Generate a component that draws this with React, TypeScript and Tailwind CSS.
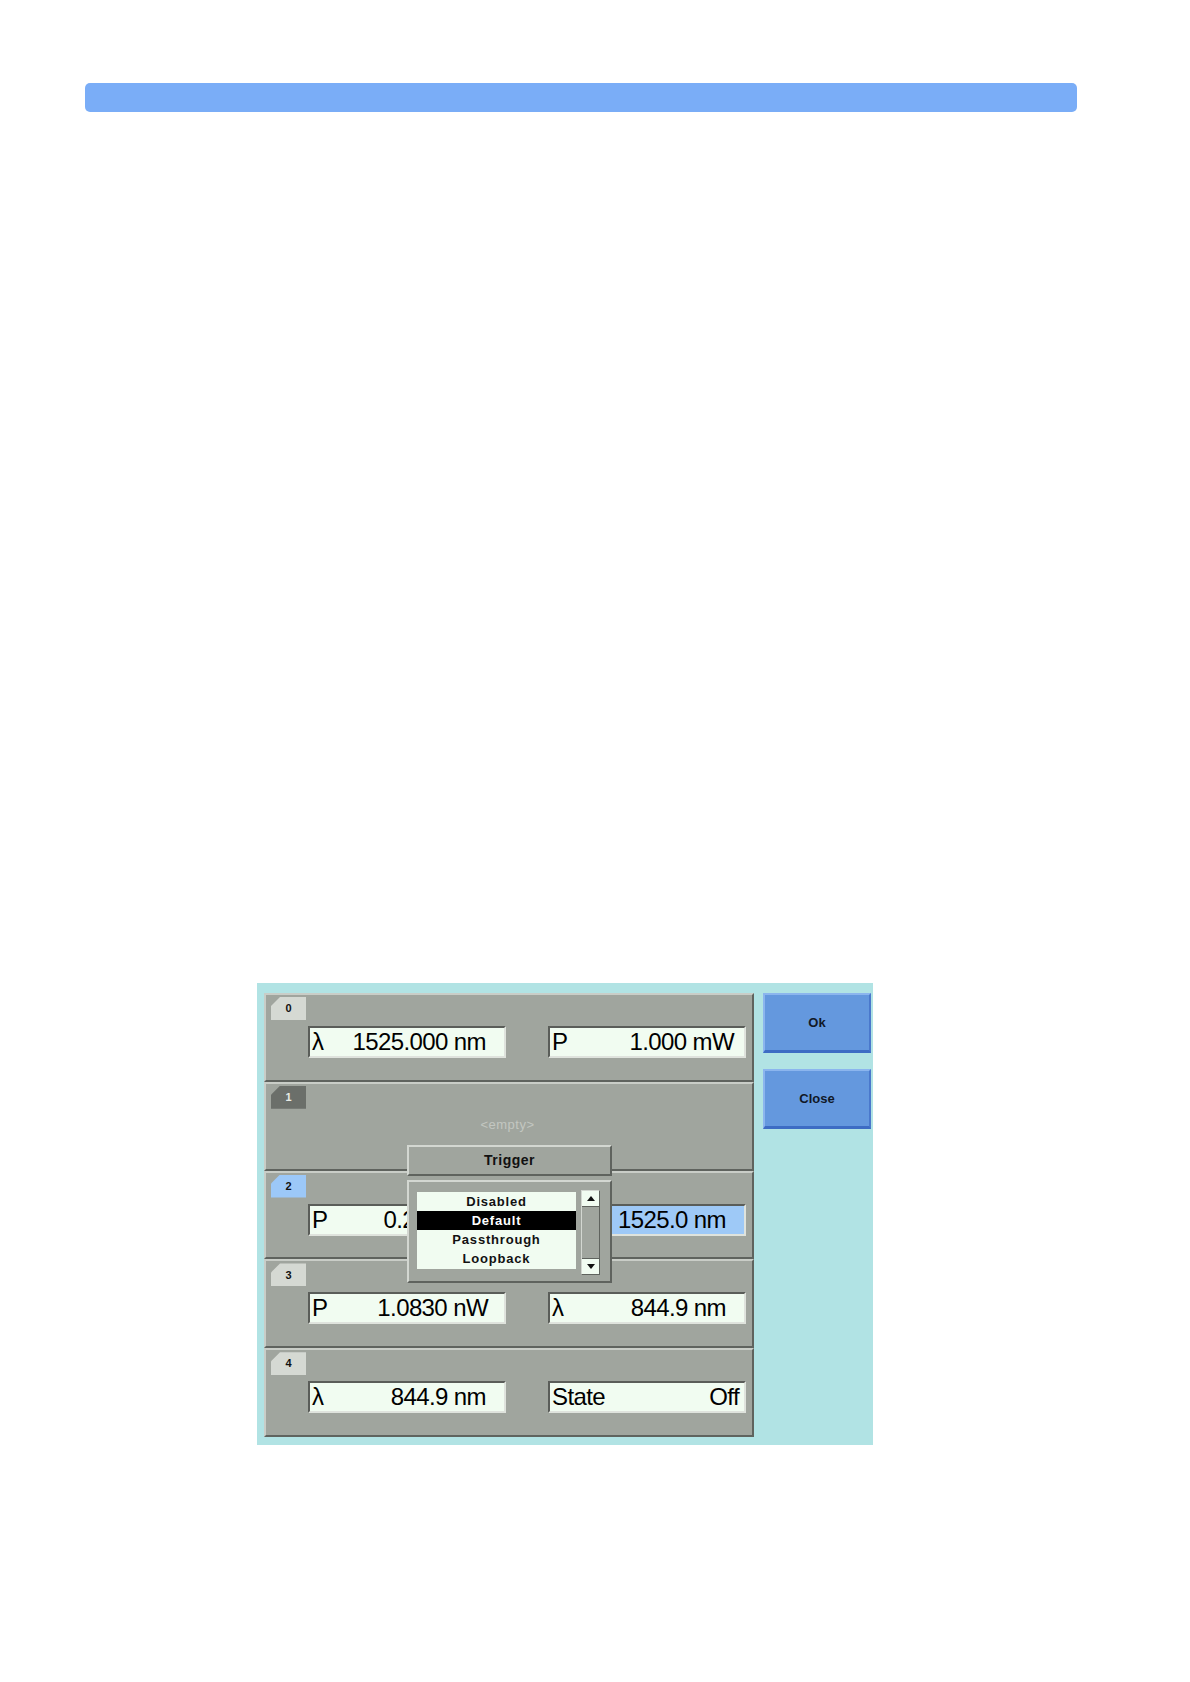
import React from "react";

const FONT = { fontFamily: '"Liberation Sans", Arial, sans-serif' };

function Tab({ label, variant }: { label: string; variant: "light" | "dark" | "blue" }) {
  const bg =
    variant === "dark" ? "bg-[#6b6f6a] text-[#e8ece6]" : variant === "blue" ? "bg-[#9cc8f8] text-[#111]" : "bg-[#d5d9d3] text-[#111]";
  return (
    <div
      className={`w-[35px] h-[23px] flex items-center justify-center text-[11px] font-bold ${bg}`}
      style={{ clipPath: "polygon(9px 0, 100% 0, 100% 100%, 0 100%, 0 9px)" }}
    >
      {label}
    </div>
  );
}

function Field({
  label,
  value,
  pr,
  blue,
}: {
  label: string;
  value: string;
  pr: string;
  blue?: boolean;
}) {
  return (
    <div
      className={`w-[198px] h-[32px] flex items-center justify-between border-t-2 border-l-2 border-t-[#5a5d59] border-l-[#5a5d59] border-b-2 border-r-2 border-b-[#dfe3dd] border-r-[#dfe3dd] ${
        blue ? "bg-[#9ec9f7]" : "bg-[#f1fcf1]"
      } text-[24px] leading-none text-black tracking-[-0.6px] pl-[2px] ${pr}`}
    >
      <span>{label}</span>
      <span>{value}</span>
    </div>
  );
}

function Row({
  tab,
  variant,
  children,
  last,
}: {
  tab: string;
  variant: "light" | "dark" | "blue";
  children: React.ReactNode;
  last?: boolean;
}) {
  return (
    <div
      className={`relative h-[89px] border-t-2 border-t-[#c9cdc7] border-l-2 border-l-[#c9cdc7] border-r-2 border-r-[#5f635e] ${
        last ? "border-b-2" : "border-b-2"
      } border-b-[#5f635e] bg-[#a0a59e] flex flex-col pl-[5px] pt-[2px]`}
    >
      <Tab label={tab} variant={variant} />
      <div className="flex-1">{children}</div>
    </div>
  );
}

function Btn({ label }: { label: string }) {
  return (
    <div className="w-[108px] h-[60px] flex items-center justify-center bg-[#6498de] border-t-2 border-l-2 border-t-[#8bb5ee] border-l-[#8bb5ee] border-b-[3px] border-r-2 border-b-[#3d6cc4] border-r-[#4a78cc] text-[13px] font-bold text-[#111827]">
      {label}
    </div>
  );
}

export default function App() {
  return (
    <div className="w-[1190px] h-[1682px] bg-white relative" style={FONT}>
      <div className="pt-[83px] pl-[85px]">
        <div className="w-[992px] h-[29px] rounded-[5px] bg-[#7aadf7]" />
      </div>

      <div className="ml-[257px] mt-[871px] w-[616px] h-[462px] bg-[#b1e3e4] pl-[7px] pt-[10px] flex gap-[9px]">
        <div className="relative w-[490px] h-[444px] flex flex-col">
          <Row tab="0" variant="light">
            <div className="flex pl-[37px] gap-[42px] pt-[6px]">
              <Field label="λ" value="1525.000 nm" pr="pr-[18px]" />
              <Field label="P" value="1.000 mW" pr="pr-[10px]" />
            </div>
          </Row>
          <Row tab="1" variant="dark">
            <div className="flex justify-center pt-[6px] pr-[8px]">
              <span className="text-[13px] text-[#c3c7c1] tracking-[0.5px]">&lt;empty&gt;</span>
            </div>
          </Row>
          <Row tab="2" variant="blue">
            <div className="flex pl-[37px] gap-[42px] pt-[6px]">
              <Field label="P" value="0.200 mW" pr="pr-[16px]" />
              <Field label="λ" value="1525.0 nm" pr="pr-[18px]" blue />
            </div>
          </Row>
          <Row tab="3" variant="light">
            <div className="flex pl-[37px] gap-[42px] pt-[6px]">
              <Field label="P" value="1.0830 nW" pr="pr-[16px]" />
              <Field label="λ" value="844.9 nm" pr="pr-[18px]" />
            </div>
          </Row>
          <Row tab="4" variant="light" last>
            <div className="flex pl-[37px] gap-[42px] pt-[6px]">
              <Field label="λ" value="844.9 nm" pr="pr-[18px]" />
              <Field label="State" value="Off" pr="pr-[5px]" />
            </div>
          </Row>

          {/* Trigger popup */}
          <div className="absolute left-[143px] top-[152px] w-[205px] flex flex-col gap-[4px]">
            <div className="h-[31px] bg-[#a0a59e] border-t-2 border-l-2 border-t-[#d3d7d1] border-l-[#d3d7d1] border-b-2 border-r-2 border-b-[#5f635e] border-r-[#5f635e] flex items-center justify-center text-[14px] font-bold text-[#111] tracking-[0.5px]">
              Trigger
            </div>
            <div className="h-[103px] bg-[#a0a59e] border-t-2 border-l-2 border-t-[#d3d7d1] border-l-[#d3d7d1] border-b-2 border-r-2 border-b-[#5f635e] border-r-[#5f635e] flex pl-[8px] pt-[8px] gap-[5px]">
              <div className="w-[159px] h-[77px] mt-[2px] bg-[#f1fcf1] flex flex-col text-[13px] font-bold tracking-[0.8px] text-[#111]">
                <div className="h-[19px] flex items-center justify-center">Disabled</div>
                <div className="h-[19px] flex items-center justify-center bg-black text-white">Default</div>
                <div className="h-[19px] flex items-center justify-center">Passthrough</div>
                <div className="h-[19px] flex items-center justify-center">Loopback</div>
              </div>
              <div className="w-[19px] h-[85px] border-t border-l border-t-[#d3d7d1] border-l-[#d3d7d1] border-b border-r border-b-[#5f635e] border-r-[#5f635e] flex flex-col justify-between bg-[#a0a59e]">
                <div className="h-[16px] bg-[#f1fcf1] border-b border-[#5f635e] flex items-center justify-center">
                  <svg width="8" height="5" viewBox="0 0 8 5"><path d="M0 5 L4 0 L8 5 Z" fill="#111" /></svg>
                </div>
                <div className="h-[16px] bg-[#f1fcf1] border-t border-[#5f635e] flex items-center justify-center">
                  <svg width="8" height="5" viewBox="0 0 8 5"><path d="M0 0 L4 5 L8 0 Z" fill="#111" /></svg>
                </div>
              </div>
            </div>
          </div>
        </div>

        <div className="flex flex-col gap-[16px]">
          <Btn label="Ok" />
          <Btn label="Close" />
        </div>
      </div>
    </div>
  );
}
